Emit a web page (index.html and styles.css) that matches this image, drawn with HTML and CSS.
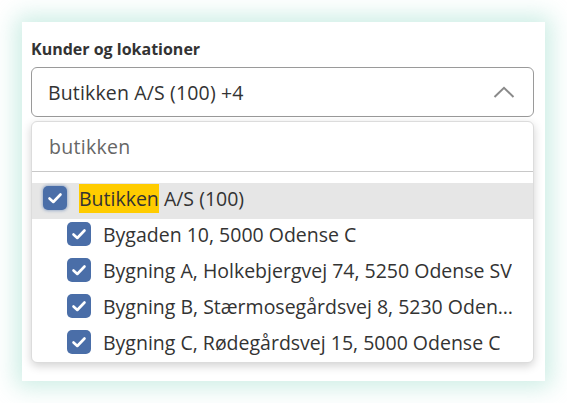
FILE: index.html
```html
<!DOCTYPE html>
<html lang="da">
<head>
<meta charset="utf-8">
<link rel="stylesheet" href="styles.css">
</head>
<body>
<div class="page">
  <div class="card">
    <div class="label">Kunder og lokationer</div>
    <div class="select">
      <span class="select-value">Butikken A/S (100) +4</span>
      <svg class="chevron" width="22" height="12" viewBox="0 0 22 12"><path d="M1.5 11 L11 1.8 L20.5 11" fill="none" stroke="#8a8a8a" stroke-width="2"/></svg>
    </div>
    <div class="dropdown">
      <div class="search">butikken</div>
      <div class="list">
        <div class="row row-parent">
          <span class="cb cb-focus"><svg width="24" height="24" viewBox="0 0 24 24"><path d="M6.5 12.5 L10.3 16 L17.5 8.5" fill="none" stroke="#fff" stroke-width="2.6" stroke-linecap="round" stroke-linejoin="round"/></svg></span>
          <span class="txt"><mark class="hl">Butikken</mark> A/S (100)</span>
        </div>
        <div class="row row-child">
          <span class="cb"><svg width="24" height="24" viewBox="0 0 24 24"><path d="M6.5 12.5 L10.3 16 L17.5 8.5" fill="none" stroke="#fff" stroke-width="2.6" stroke-linecap="round" stroke-linejoin="round"/></svg></span>
          <span class="txt">Bygaden 10, 5000 Odense C</span>
        </div>
        <div class="row row-child">
          <span class="cb"><svg width="24" height="24" viewBox="0 0 24 24"><path d="M6.5 12.5 L10.3 16 L17.5 8.5" fill="none" stroke="#fff" stroke-width="2.6" stroke-linecap="round" stroke-linejoin="round"/></svg></span>
          <span class="txt">Bygning A, Holkebjergvej 74, 5250 Odense SV</span>
        </div>
        <div class="row row-child">
          <span class="cb"><svg width="24" height="24" viewBox="0 0 24 24"><path d="M6.5 12.5 L10.3 16 L17.5 8.5" fill="none" stroke="#fff" stroke-width="2.6" stroke-linecap="round" stroke-linejoin="round"/></svg></span>
          <span class="txt">Bygning B, Stærmosegårdsvej 8, 5230 Odense M</span>
        </div>
        <div class="row row-child">
          <span class="cb"><svg width="24" height="24" viewBox="0 0 24 24"><path d="M6.5 12.5 L10.3 16 L17.5 8.5" fill="none" stroke="#fff" stroke-width="2.6" stroke-linecap="round" stroke-linejoin="round"/></svg></span>
          <span class="txt">Bygning C, Rødegårdsvej 15, 5000 Odense C</span>
        </div>
      </div>
    </div>
  </div>
</div>
</body>
</html>
```
FILE: styles.css
```css
* { box-sizing: border-box; }
html, body { margin: 0; padding: 0; background: #fff; }
body { font-family: "Open Sans", "Noto Sans", sans-serif; color: #333; }
.page { padding: 22px; width: 567px; height: 403px; }
.card {
  width: 523px;
  height: 359px;
  background: #fff;
  padding: 17px 11px 0 9px;
  box-shadow: 0 0 22px 6px rgba(160, 222, 206, 0.55);
}
.label {
  font-size: 16px;
  font-weight: 700;
  line-height: 20px;
  color: #333;
  margin-bottom: 8px;
}
.select {
  height: 50px;
  border: 1px solid #9a9a9a;
  border-radius: 6px;
  display: flex;
  align-items: center;
  justify-content: space-between;
  padding: 0 18px 0 16px;
}
.select-value { font-size: 19.5px; letter-spacing: 0.15px; color: #333; }
.chevron { display: block; }
.dropdown {
  margin-top: 4px;
  height: 242px;
  border: 1px solid #dcdcdc;
  border-radius: 6px;
  box-shadow: 0 3px 10px rgba(0, 0, 0, 0.18);
  overflow: hidden;
  background: #fff;
}
.search {
  height: 50px;
  border-bottom: 1px solid #c8c8c8;
  display: flex;
  align-items: center;
  padding-left: 17px;
  font-size: 19.5px;
  letter-spacing: 0.3px;
  color: #666;
}
.list { padding-top: 11px; }
.row {
  height: 36px;
  display: flex;
  align-items: flex-start;
  gap: 12px;
  padding-right: 12px;
}
.row-parent { background: #e6e6e6; padding-left: 11px; }
.row-child { padding-left: 35px; }
.cb {
  flex: none;
  width: 24px;
  height: 24px;
  margin-top: 3px;
  border-radius: 5px;
  background: #4a6ea8;
  display: block;
}
.cb svg { display: block; }
.cb-focus { box-shadow: 0 0 3px 1px rgba(74, 110, 168, 0.45); }
.txt {
  font-size: 19.5px;
  line-height: 36px;
  margin-top: -2px;
  color: #333;
  white-space: nowrap;
  overflow: hidden;
  text-overflow: ellipsis;
  min-width: 0;
}
.hl { background: #ffcc00; color: #333; padding: 1px 0 1px; }
```
